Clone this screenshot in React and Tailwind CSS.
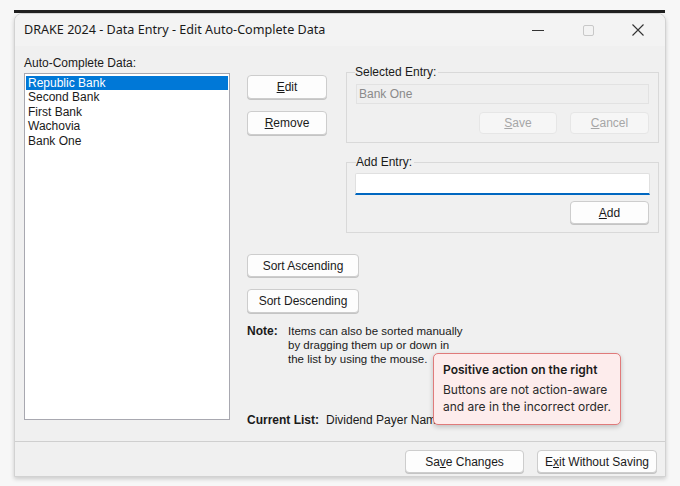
import React from "react";

const sys = { fontFamily: '"Liberation Sans", Arial, sans-serif' };
const ui = { fontFamily: '"Noto Sans", "Open Sans", sans-serif' };
const inter = { fontFamily: 'Inter, "Noto Sans", sans-serif' };

function Btn({ children, className = "", disabled = false }) {
  return (
    <div
      className={
        "flex items-center justify-center rounded-[4px] border text-[12px] leading-none " +
        (disabled
          ? "border-[#e6e6e6] bg-[#f6f6f6] text-[#a6a6a6] "
          : "border-[#cdcdcd] bg-[#fdfdfd] text-[#1a1a1a] shadow-[0_1px_0_#c4c4c4] ") +
        className
      }
      style={sys}
    >
      {children}
    </div>
  );
}

export default function App() {
  const items = ["Republic Bank", "Second Bank", "First Bank", "Wachovia", "Bank One"];
  return (
    <div className="relative w-[680px] h-[486px] bg-[#f7f7f7] overflow-hidden">
      <div className="h-[10px]" />
      <div className="ml-[14px] w-[651px] h-[3px] bg-[#202020]" />
      <div className="ml-[14px] w-[652px] h-[464px] rounded-t-[8px] border border-[#d2d2d2] bg-[#f0f0f0] shadow-[0_2px_4px_rgba(0,0,0,0.18)] flex flex-col overflow-hidden">
        {/* title bar */}
        <div className="h-[32px] flex items-center bg-[#f3f3f3] shrink-0">
          <div className="pl-[9px] text-[12.6px] text-[#1a1a1a]" style={ui}>
            DRAKE 2024 - Data Entry - Edit Auto-Complete Data
          </div>
          <div className="ml-auto flex items-center h-full">
            <div className="w-[50px] h-full flex items-center justify-center">
              <div className="w-[12px] h-[1px] bg-[#333]" />
            </div>
            <div className="w-[50px] h-full flex items-center justify-center">
              <div className="w-[11px] h-[11px] border border-[#c8c8c8] rounded-[2px]" />
            </div>
            <div className="w-[50px] h-full flex items-center justify-center">
              <svg width="12" height="12" viewBox="0 0 12 12">
                <path d="M0.5 0.5 L11.5 11.5 M11.5 0.5 L0.5 11.5" stroke="#333" strokeWidth="1.1" />
              </svg>
            </div>
            <div className="w-[2px]" />
          </div>
        </div>

        {/* body */}
        <div className="h-[395px] flex shrink-0 relative" style={sys}>
          {/* left list */}
          <div className="pl-[9px] pt-[10px] w-[225px] shrink-0">
            <div className="text-[12px] leading-[14px] text-[#1a1a1a] h-[17px]">Auto-Complete Data:</div>
            <div className="w-[206px] h-[347px] bg-white border border-[#a8a8b0] pt-[2px] px-[1px]">
              {items.map((t, i) => (
                <div
                  key={t}
                  className={
                    "h-[14.4px] leading-[14px] text-[12px] pl-[2px] " +
                    (i === 0 ? "bg-[#0078d7] text-white" : "text-[#1a1a1a]")
                  }
                >
                  {t}
                </div>
              ))}
            </div>
          </div>

          {/* right */}
          <div className="pl-[7px] pt-[29px] flex flex-col">
            <div className="flex">
              <div className="w-[80px] flex flex-col gap-[12px]">
                <Btn className="h-[24px]">
                  <span><u>E</u>dit</span>
                </Btn>
                <Btn className="h-[24px]">
                  <span><u>R</u>emove</span>
                </Btn>
              </div>
              <div className="ml-[19px] flex flex-col -mt-[10px]">
                <fieldset className="w-[313px] h-[78px] border border-[#d9d9d9] px-[9px] pb-[9px]">
                  <legend className="text-[12px] leading-[14px] text-[#1a1a1a] pr-[2px] -ml-[1px]">Selected Entry:</legend>
                  <div className="mt-[5px] h-[20px] border border-[#e2e2e2] bg-[#efefef] text-[12px] leading-[18px] text-[#8a8a8a] pl-[2px]">
                    Bank One
                  </div>
                  <div className="mt-[8px] flex justify-end gap-[13px]">
                    <Btn disabled className="w-[78px] h-[22px]">
                      <span><u>S</u>ave</span>
                    </Btn>
                    <Btn disabled className="w-[79px] h-[22px]">
                      <span><u>C</u>ancel</span>
                    </Btn>
                  </div>
                </fieldset>
                <fieldset className="mt-[12px] w-[313px] h-[78px] border border-[#d9d9d9] px-[8px] pb-[8px]">
                  <legend className="text-[12px] leading-[14px] text-[#1a1a1a] pr-[2px] ml-[1px]">Add Entry:</legend>
                  <div className="mt-[4px] h-[22px] bg-white border border-[#e0e0e0] border-b-[2px] border-b-[#0067c0] rounded-t-[2px]" />
                  <div className="mt-[6px] flex justify-end pr-[1px]">
                    <Btn className="w-[79px] h-[23px]">
                      <span><u>A</u>dd</span>
                    </Btn>
                  </div>
                </fieldset>
              </div>
            </div>

            <Btn className="mt-[21px] w-[112px] h-[23px]">Sort Ascending</Btn>
            <Btn className="mt-[12px] w-[112px] h-[24px]">Sort Descending</Btn>

            <div className="mt-[11px] flex text-[11.5px] leading-[14px] text-[#1a1a1a]">
              <div className="w-[41px] font-bold text-[12px]">Note:</div>
              <div>
                Items can also be sorted manually
                <br />
                by dragging them up or down in
                <br />
                the list by using the mouse.
              </div>
            </div>

            <div className="mt-[47px] flex text-[12px] leading-[14px] text-[#1a1a1a] whitespace-nowrap">
              <span className="font-bold">Current List:</span>
              <span className="ml-[7px]">Dividend Payer Names</span>
            </div>
          </div>
        </div>

        {/* footer */}
        <div className="flex-1 border-t border-[#cfcfcf] flex items-start justify-end pt-[8px] pr-[8px] gap-[13px]">
          <Btn className="w-[119px] h-[23px]">
            <span>Sa<u>v</u>e Changes</span>
          </Btn>
          <Btn className="w-[120px] h-[23px]">
            <span>E<u>x</u>it Without Saving</span>
          </Btn>
        </div>
      </div>

      {/* annotation tooltip */}
      <div
        className="absolute left-[433px] top-[353px] w-[188px] h-[72px] rounded-[5px] border border-[#e07a7a] bg-[#fdecec] shadow-[0_2px_5px_rgba(0,0,0,0.2)] pl-[9px] pt-[8px]"
        style={inter}
      >
        <div className="text-[12px] leading-[16px] font-semibold text-[#1a1a1a]">Positive action on the right</div>
        <div className="mt-[3px] text-[12px] leading-[17px] text-[#2a2a2a]">
          Buttons are not action-aware
          <br />
          and are in the incorrect order.
        </div>
      </div>
    </div>
  );
}
